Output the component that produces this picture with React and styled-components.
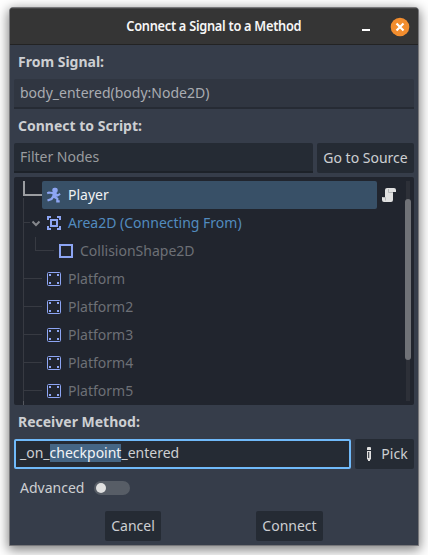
import React from 'react';
import styled, { createGlobalStyle } from 'styled-components';

const GlobalStyle = createGlobalStyle`
  * { box-sizing: border-box; }
  html, body { margin: 0; height: 100%; background: #fff; overflow: hidden; }
  body { font: 14px/20px "Noto Sans", "Open Sans", sans-serif; color: #cdcfd2; }
`;

const Desktop = styled.main`
  width: 428px;
  height: 555px;
  padding: 7px 9px 9px;
  background: #fff;
`;

const Dialog = styled.section`
  width: 410px;
  height: 539px;
  display: flex;
  flex-direction: column;
  background: #363d4a;
  border: 1px solid #77777a;
  border-radius: 4px 4px 0 0;
  box-shadow: 0 3px 12px 1px rgba(0, 0, 0, 0.5);
  overflow: hidden;
`;

const TitleBar = styled.header`
  height: 37px;
  flex: none;
  display: grid;
  grid-template-columns: 1fr auto 1fr;
  align-items: center;
  background: #353535;
  border-bottom: 1px solid #232323;
  border-top: 1px solid #484848;
`;

const Title = styled.h1`
  grid-column: 2;
  margin: 0 0 1px;
  font-size: 14px;
  line-height: 20px;
  font-weight: 600;
  white-space: nowrap;
  color: #f6f6f6;
  letter-spacing: -0.3px;
  transform: scaleX(0.914);
`;

const WindowControls = styled.div`
  display: flex;
  justify-content: flex-end;
  align-items: center;
  gap: 20px;
  padding-right: 8px;
  svg { display: block; }
`;

const Content = styled.div`
  flex: 1;
  display: flex;
  flex-direction: column;
  padding: 0 4px 4px;
`;

const SectionLabel = styled.h2`
  margin: 0;
  padding: 0 4px;
  height: 34px;
  line-height: 34px;
  font-size: 14px;
  font-weight: 700;
`;

const FieldRow = styled.div`
  display: flex;
  gap: 4px;
  height: 30px;
`;

const Field = styled.div`
  flex: 1;
  height: 30px;
  padding: 0 6px;
  line-height: 27px;
  border-radius: 2px 2px 0 0;
  background: ${(p) => (p.$readOnly ? '#303641' : '#252b34')};
  border-bottom: 2px solid ${(p) => (p.$readOnly ? '#262b34' : '#1d2229')};
  color: ${(p) => (p.$readOnly ? '#a9acb1' : '#999b9f')};
`;

const FocusedField = styled.div`
  flex: 1;
  padding: 0 4px;
  border: 2px solid #70bafa;
  border-radius: 2px;
  background: #252b34;
  line-height: 24px;
`;

const Selection = styled.span`
  display: inline-block;
  height: 18px;
  line-height: 18px;
  background: #456685;
  color: #f2f4f6;
`;

const Button = styled.button`
  height: 30px;
  width: ${(p) => p.$width}px;
  display: flex;
  align-items: center;
  justify-content: center;
  gap: 4px;
  padding: 0 0 1px;
  border: 0;
  border-radius: 2px;
  background: #252b34;
  color: #cdcfd2;
  font: inherit;
  white-space: nowrap;
`;

const Tree = styled.div`
  position: relative;
  display: flex;
  justify-content: space-between;
  height: 228px;
  margin-top: 4px;
  padding: 4px 3px 4px 0;
  border-radius: 2px;
  background: #21252e;
  overflow: hidden;
`;

const Guides = styled.svg`
  position: absolute;
  left: 0;
  top: 0;
`;

const Rows = styled.div`
  width: 388px;
`;

const Row = styled.div`
  height: 28px;
  display: flex;
  align-items: center;
  gap: 4px;
  padding-left: ${(p) => p.$indent}px;
`;

const Item = styled.div`
  height: 28px;
  display: flex;
  align-items: center;
  gap: 6px;
  padding-left: 4px;
  width: ${(p) => (p.$selected ? '335px' : 'auto')};
  border-radius: 2px;
  background: ${(p) => (p.$selected ? '#385067' : 'transparent')};
  color: ${(p) => p.$color};
  svg { flex: none; }
`;

const ItemText = styled.span`
  white-space: nowrap;
`;

const ScrollTrack = styled.div`
  width: 6px;
  height: 220px;
  padding-top: 18px;
  background: linear-gradient(#2d3038, #2d3038) center / 4px 100% no-repeat;
`;

const ScrollThumb = styled.div`
  height: 161px;
  border-radius: 3px;
  background: #707277;
`;

const OptionRow = styled.div`
  height: 38px;
  display: flex;
  align-items: center;
  gap: 10px;
  padding-left: 6px;
`;

const Toggle = styled.span`
  width: 36px;
  height: 14px;
  padding: 2px;
  border-radius: 7px;
  background: #575d66;
`;

const ToggleKnob = styled.span`
  display: block;
  width: 10px;
  height: 10px;
  border-radius: 50%;
  background: #e0e0e0;
`;

const Actions = styled.footer`
  display: flex;
  gap: 95px;
  padding: 4px 0 0 91px;
`;

const BLUE = '#8da5f3';

const Icon = ({ children }) => (
  <svg width="16" height="16" viewBox="0 0 16 16">{children}</svg>
);

const CharacterIcon = () => (
  <Icon>
    <rect x="6.300" y="0.700" width="5.400" height="5" rx="2" fill={BLUE} />
    <path d="M6.800 5h3.700l.3 6H6Z" fill={BLUE} />
    <path d="M1.200 6.300 3 5.600l5 .6 3.400 2.300 2.800-1.600" fill="none" stroke={BLUE} strokeWidth="2" />
    <path d="M7.300 9.500 5.500 12l-4 1.500M8.500 10l2.800 1.600v2.700h2.400" fill="none" stroke={BLUE} strokeWidth="2.200" />
  </Icon>
);

const AreaIcon = () => (
  <Icon>
    <path d="M2 5V2h3M11 2h3v3M14 11v3h-3M5 14H2v-3" fill="none" stroke={BLUE} strokeWidth="2" />
    <path d="M5 5h6v6H5z" fill="none" stroke={BLUE} strokeWidth="2" />
  </Icon>
);

const ShapeIcon = () => (
  <Icon>
    <path d="M2 2h12v12H2z" fill="none" stroke={BLUE} strokeWidth="2" />
  </Icon>
);

const StaticBodyIcon = () => (
  <Icon>
    <rect x="1.5" y="1.5" width="13" height="13" rx="1" fill="none" stroke={BLUE} />
    <path d="M3 3h2v2H3zM11 3h2v2h-2zM3 11h2v2H3zM11 11h2v2h-2z" fill={BLUE} />
  </Icon>
);

const ScriptIcon = () => (
  <svg width="16" height="16" viewBox="0 0 16 16">
    <path d="M6 1h7a2 2 0 0 1 2 2v2h-3v8a2 2 0 0 1-2 2H3a2 2 0 0 1-2-2v-3h3V3a2 2 0 0 1 2-2Z" fill="#e0e0e0" />
    <path d="M7.500 2v3.500H12M1.500 10.500h3v3" fill="none" stroke="#b4b6b8" />
  </svg>
);

const PickIcon = () => (
  <svg width="16" height="16" viewBox="0 0 16 16">
    <path fillRule="evenodd" d="M7 1h2a1 1 0 0 1 1 1v2H6V2a1 1 0 0 1 1-1ZM6 5h4v8l-1 1v1H7v-1l-1-1ZM7.200 6v6h1V6Z" fill="#e0e0e0" />
  </svg>
);

const nodes = [
  { name: 'Player', icon: CharacterIcon, indent: 28, color: '#f0f2f4', selected: true, script: true },
  { name: 'Area2D (Connecting From)', icon: AreaIcon, indent: 28, color: '#528bbf' },
  { name: 'CollisionShape2D', icon: ShapeIcon, indent: 40, color: '#6d7076' },
  ...['Platform', 'Platform2', 'Platform3', 'Platform4', 'Platform5'].map((name) => ({
    name, icon: StaticBodyIcon, indent: 28, color: '#6d7076',
  })),
];

function NodeTree() {
  return (
    <Tree>
      <Guides width="60" height="228" viewBox="0 0 60 228" fill="none" shapeRendering="crispEdges">
        <path d="M10 4v14h18" stroke="#9b9da1" strokeWidth="2" />
        <path d="M9.5 21v207M9.5 45.5H16M21.5 60v13.500H40M9.500 101.500H28M9.500 129.500H28M9.500 157.500H28M9.500 185.500H28M9.500 213.500H28" stroke="#373a42" />
        <path d="M9.500 224v4" stroke="#55585f" />
        <path d="m18.500 44.500 3.500 3.500 3.500-3.500" stroke="#85878c" strokeWidth="2" shapeRendering="auto" />
      </Guides>
      <Rows>
        {nodes.map(({ name, icon: NodeIcon, indent, color, selected, script }) => (
          <Row key={name} $indent={indent}>
            <Item $color={color} $selected={selected}>
              <NodeIcon />
              <ItemText>{name}</ItemText>
            </Item>
            {script && <ScriptIcon />}
          </Row>
        ))}
      </Rows>
      <ScrollTrack><ScrollThumb /></ScrollTrack>
    </Tree>
  );
}

export default function App() {
  return (
    <>
      <GlobalStyle />
      <Desktop>
        <Dialog>
          <TitleBar>
            <Title>Connect a Signal to a Method</Title>
            <WindowControls>
              <svg width="8" height="20" viewBox="0 0 8 20"><path d="M0 12h8v2H0z" fill="#fff" /></svg>
              <svg width="20" height="20" viewBox="0 0 20 20">
                <circle cx="10" cy="10" r="9.300" fill="#f28d2e" />
                <path d="m6.500 6.500 7 7m0-7-7 7" stroke="#fff" strokeWidth="2.200" />
              </svg>
            </WindowControls>
          </TitleBar>
          <Content>
            <SectionLabel>From Signal:</SectionLabel>
            <FieldRow><Field $readOnly>body_entered(body:Node2D)</Field></FieldRow>
            <SectionLabel>Connect to Script:</SectionLabel>
            <FieldRow>
              <Field>Filter Nodes</Field>
              <Button $width={97}>Go to Source</Button>
            </FieldRow>
            <NodeTree />
            <SectionLabel>Receiver Method:</SectionLabel>
            <FieldRow>
              <FocusedField>_on_<Selection>checkpoint</Selection>_entered</FocusedField>
              <Button $width={59}><PickIcon />Pick</Button>
            </FieldRow>
            <OptionRow>Advanced<Toggle><ToggleKnob /></Toggle></OptionRow>
            <Actions>
              <Button $width={56}>Cancel</Button>
              <Button $width={67}>Connect</Button>
            </Actions>
          </Content>
        </Dialog>
      </Desktop>
    </>
  );
}
